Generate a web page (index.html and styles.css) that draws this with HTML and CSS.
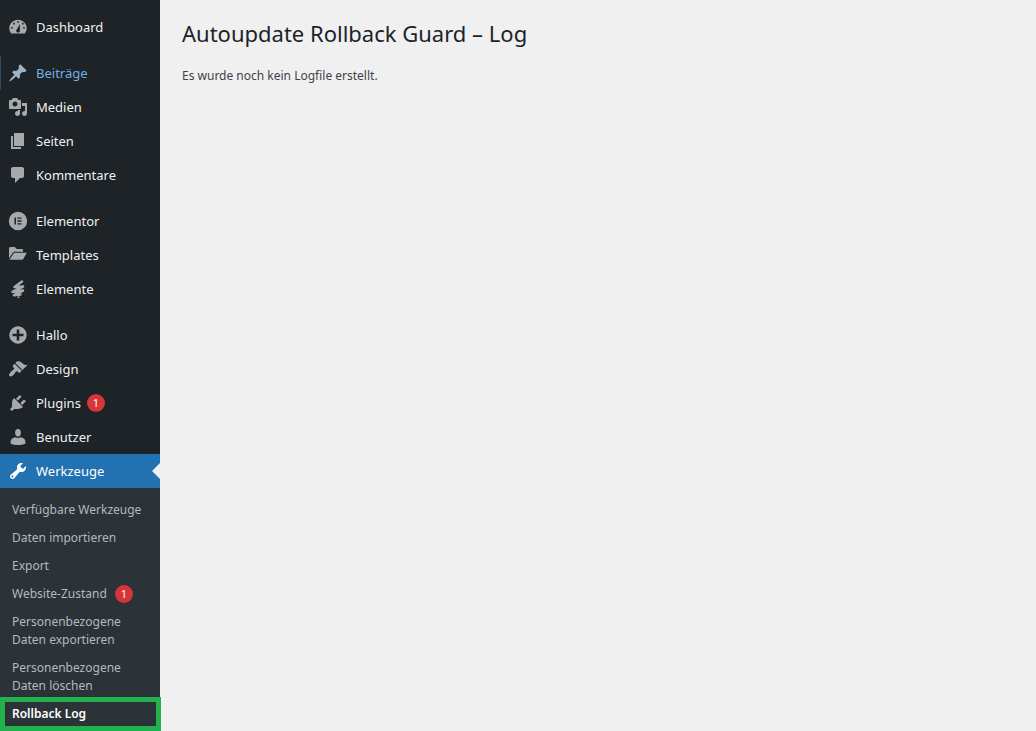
FILE: index.html
```html
<!DOCTYPE html>
<html lang="de">
<head>
    <meta charset="UTF-8" />
    <meta name="viewport" content="width=device-width, initial-scale=1.0"/>
    <title>Autoupdate Rollback Guard – Log</title>
    <link rel="stylesheet" href="styles.css">
</head>
<body>

<nav class="admin-menu">
    <ul class="menu">
        <li>
            <a href="#">
                <svg class="icon" viewBox="0 0 20 20"><path fill-rule="evenodd" d="M3.300 16.500h13.400C18 15 18.700 13.300 18.700 11.300c0-4.800-3.900-8.600-8.700-8.600s-8.700 3.800-8.700 8.600c0 2 .7 3.700 2 5.200zM9.200 4.200h1.600v1.600H9.200zM5.200 5.800h1.600v1.600H5.200zM3.200 9.900h1.600v1.600H3.200zM15.200 9.900h1.600v1.600h-1.600zM14 5.800h1.600v1.600H14zM11.900 7l-2.800 5c-.6.400-.9 1-.9 1.700 0 1 .8 1.900 1.800 1.900s1.900-.9 1.900-1.900z"/></svg>
                Dashboard
            </a>
        </li>

        <li class="group hover">
            <a href="#">
                <svg class="icon" viewBox="0 0 20 20"><path d="M10.44 3.02l1.82-1.82 6.36 6.35-1.83 1.82c-1.05-.68-2.48-.57-3.41.36l-.75.75c-.92.93-1.04 2.35-.35 3.41l-1.83 1.82-2.41-2.41-2.8 2.79c-.42.42-3.38 2.71-3.8 2.29s1.86-3.39 2.28-3.81l2.79-2.79L4.1 9.36l1.83-1.82c1.05.69 2.48.57 3.4-.36l.75-.75c.93-.92 1.05-2.35.36-3.41z"/></svg>
                Beiträge
            </a>
        </li>
        <li>
            <a href="#">
                <svg class="icon" viewBox="0 0 20 20"><path d="M13 11V4c0-.55-.45-1-1-1h-1.67L9 1H5L3.67 3H2c-.55 0-1 .45-1 1v7c0 .55.45 1 1 1h10c.55 0 1-.45 1-1zM7 4.5c1.38 0 2.5 1.12 2.5 2.5S8.38 9.5 7 9.5 4.5 8.38 4.5 7 5.62 4.5 7 4.5zM14 6h5v10.5c0 1.38-1.12 2.5-2.5 2.5S14 17.88 14 16.5s1.12-2.5 2.5-2.5c.17 0 .34.02.5.05V9h-3V6zm-4 8.05V13h2v3.5c0 1.38-1.12 2.5-2.5 2.5S7 17.88 7 16.5 8.12 14 9.5 14c.17 0 .34.02.5.05z"/></svg>
                Medien
            </a>
        </li>
        <li>
            <a href="#">
                <svg class="icon" viewBox="0 0 20 20"><path d="M6 15V2h10v13H6zm-1 1h8v2H3V5h2v11z"/></svg>
                Seiten
            </a>
        </li>
        <li>
            <a href="#">
                <svg class="icon" viewBox="0 0 20 20"><path d="M5 2h9c1.1 0 2 .9 2 2v7c0 1.1-.9 2-2 2h-2l-5 5v-5H5c-1.1 0-2-.9-2-2V4c0-1.1.9-2 2-2z"/></svg>
                Kommentare
            </a>
        </li>

        <li class="group">
            <a href="#">
                <svg class="icon" viewBox="0 0 20 20"><path fill-rule="evenodd" d="M10 .8a9.200 9.200 0 1 0 0 18.400A9.200 9.200 0 0 0 10 .8zM6.500 6.500H8v7H6.500zM9.300 6.500h4.200v1.300H9.300zM9.300 9.300h4.200v1.400H9.300zM9.300 12.200h4.200v1.300H9.300z"/></svg>
                Elementor
            </a>
        </li>
        <li>
            <a href="#">
                <svg class="icon" viewBox="0 0 20 20"><path d="M1 13.500V3.700C1 2.700 1.600 2 2.600 2h3.600c.8 0 1.200.3 1.600.9l.7 1.100h5c1 0 1.600.6 1.600 1.600v1.200H7.300c-1.400 0-2.300.5-3 1.700zM1.500 14.700l3.900-6c.4-.6.9-.9 1.700-.9h11.700l-3.400 6c-.4.6-.8.9-1.600.9z"/></svg>
                Templates
            </a>
        </li>
        <li>
            <a href="#">
                <svg class="icon" viewBox="0 0 20 20"><path class="stroke" d="M14 2.500L6.500 8l8.500-.500L4.500 12.800l10.500-1.300-9 4.700 6.500-.700"/><circle cx="10.500" cy="18.300" r="1"/></svg>
                Elemente
            </a>
        </li>

        <li class="group">
            <a href="#">
                <svg class="icon" viewBox="0 0 20 20"><path d="M16.100 3.900c3.400 3.400 3.400 8.800 0 12.200s-8.800 3.400-12.200 0-3.400-8.800 0-12.200 8.800-3.400 12.200 0zM11.300 15.500v-4.200h4.200V8.700h-4.200V4.500H8.700v4.200H4.500v2.600h4.200v4.200z"/></svg>
                Hallo
            </a>
        </li>
        <li>
            <a href="#">
                <svg class="icon" viewBox="0 0 20 20"><path d="M14.48 11.06L7.41 3.99l1.500-1.500c.5-.56 2.300-.47 3.510.32 1.210.8 1.430 1.280 2.910 2.100 1.180.64 2.450 1.260 4.450.85zm-.71.71L6.700 4.700 4.930 6.470c-.39.39-.39 1.020 0 1.410l1.060 1.060c.39.39.39 1.030 0 1.420-.6.6-1.430 1.110-2.210 1.690-.35.26-.7.53-1.010.84C1.430 14.230.4 16.080 1.400 17.070c.99 1 2.840-.03 4.180-1.360.31-.31.58-.66.85-1.020.57-.78 1.080-1.610 1.690-2.210.39-.39 1.020-.39 1.410 0l1.060 1.060c.39.39 1.020.39 1.410 0z"/></svg>
                Design
            </a>
        </li>
        <li>
            <a href="#">
                <svg class="icon" viewBox="0 0 20 20"><path d="M13.110 4.360L9.870 7.600 8 5.730l3.240-3.240c.35-.34 1.050-.2 1.560.32.52.51.66 1.210.31 1.550zm-8 1.770l.91-1.120 9.010 9.010-1.190.84c-.71.71-2.630 1.160-3.820 1.160H6.140L4.900 17.260c-.59.59-1.540.59-2.120 0-.59-.58-.59-1.530 0-2.120l1.240-1.240v-3.880c0-1.130.4-3.190 1.090-3.890zm7.260 3.970l3.240-3.240c.34-.35 1.040-.21 1.550.31.52.51.66 1.210.31 1.550l-3.240 3.250z"/></svg>
                Plugins <span class="count">1</span>
            </a>
        </li>
        <li>
            <a href="#">
                <svg class="icon" viewBox="0 0 20 20"><path d="M10 9.600c-2 0-2.900-1.900-2.900-3.900C7.100 3.500 8.100 2 10 2s2.900 1.500 2.900 3.700c0 2-.9 3.900-2.900 3.900zM7.500 10.300c1.500 1 3.500 1 5 0 2.900.2 4.900 2 4.900 4.400v2.100c-2.200.9-4.700 1.300-7.400 1.300s-5.200-.4-7.400-1.300v-2.100c0-2.400 2-4.200 4.900-4.400z"/></svg>
                Benutzer
            </a>
        </li>
        <li class="current">
            <a href="#">
                <svg class="icon" viewBox="0 0 20 20"><path d="M16.680 9.770c-1.340 1.340-3.300 1.670-4.950.99l-5.410 6.520c-.99.99-2.590.99-3.580 0s-.99-2.590 0-3.570l6.520-5.420c-.68-1.650-.35-3.610.99-4.950 1.280-1.280 3.120-1.620 4.720-1.060l-2.890 2.890 2.820 2.820 2.860-2.870c.53 1.580.18 3.390-1.080 4.650zM3.810 16.210c.4.39 1.040.39 1.430 0 .4-.4.4-1.040 0-1.430-.39-.4-1.030-.4-1.430 0-.39.39-.39 1.030 0 1.430z"/></svg>
                Werkzeuge
            </a>
        </li>
    </ul>

    <!-- Untermenü: Werkzeuge -->
    <ul class="submenu">
        <li><a href="#">Verfügbare Werkzeuge</a></li>
        <li><a href="#">Daten importieren</a></li>
        <li><a href="#">Export</a></li>
        <li><a href="#">Website-Zustand <span class="count">1</span></a></li>
        <li><a href="#">Personenbezogene Daten exportieren</a></li>
        <li><a href="#">Personenbezogene Daten löschen</a></li>
        <li class="active"><a href="#">Rollback Log</a></li>
    </ul>
</nav>

<main class="content">
    <h1>Autoupdate Rollback Guard – Log</h1>
    <p>Es wurde noch kein Logfile erstellt.</p>
</main>

</body>
</html>
```
FILE: styles.css
```css
* {
    box-sizing: border-box;
}

body {
    display: flex;
    min-height: 100vh;
    margin: 0;
    background-color: #f0f0f1;
    color: #3c434a;
    font-family: "Segoe UI", "Noto Sans", sans-serif;
    font-size: 12px;
}

ul {
    margin: 0;
    padding: 0;
    list-style: none;
}

a {
    text-decoration: none;
}

/* Menü */
.admin-menu {
    display: flex;
    flex-direction: column;
    flex: none;
    width: 160px;
    padding-top: 10px;
    background-color: #1d2327;
}

.menu a {
    position: relative;
    display: flex;
    align-items: center;
    height: 34px;
    padding-left: 8px;
    color: #f0f0f1;
    font-size: 13px;
}

.menu .group {
    margin-top: 12px;
}

.icon {
    width: 20px;
    height: 20px;
    margin-right: 8px;
    fill: #a7aaad;
}

.icon .stroke {
    fill: none;
    stroke: #a7aaad;
    stroke-width: 2.6;
    stroke-linecap: round;
    stroke-linejoin: round;
}

.menu .hover a {
    box-shadow: inset 1px 0 0 #2c4a66;
    color: #72aee6;
}

.menu .hover .icon {
    fill: #9cb2c6;
}

.menu .current a {
    background-color: #2271b1;
    color: #fff;
}

.menu .current .icon {
    fill: #fff;
}

.menu .current a::after {
    content: "";
    position: absolute;
    top: 9px;
    right: 0;
    border: 8px solid transparent;
    border-left-width: 0;
    border-right-color: #f0f0f1;
}

.count {
    display: inline-block;
    min-width: 18px;
    height: 18px;
    margin-left: 6px;
    border-radius: 9px;
    background-color: #d63638;
    color: #fff;
    font-size: 11px;
    line-height: 18px;
    text-align: center;
}

/* Untermenü */
.submenu {
    flex: 1;
    padding: 8px 0 3px;
    background-color: #2c3338;
}

.submenu a {
    display: block;
    padding: 5px 12px;
    color: #b4b9be;
    line-height: 18px;
}

.submenu .count {
    margin-left: 5px;
    vertical-align: top;
}

.submenu .active {
    position: relative;
}

.submenu .active a {
    color: #fff;
    font-weight: 600;
}

.submenu .active::after {
    content: "";
    position: absolute;
    inset: -3px -1px -3px 0;
    border: 5px solid #22b14c;
    pointer-events: none;
}

/* Inhalt */
.content {
    flex: 1;
    padding: 18px 22px;
}

h1 {
    margin: 0;
    color: #1d2327;
    font-size: 22px;
    font-weight: 400;
    line-height: 30px;
}

p {
    margin: 19px 0;
    line-height: 18px;
}
```
